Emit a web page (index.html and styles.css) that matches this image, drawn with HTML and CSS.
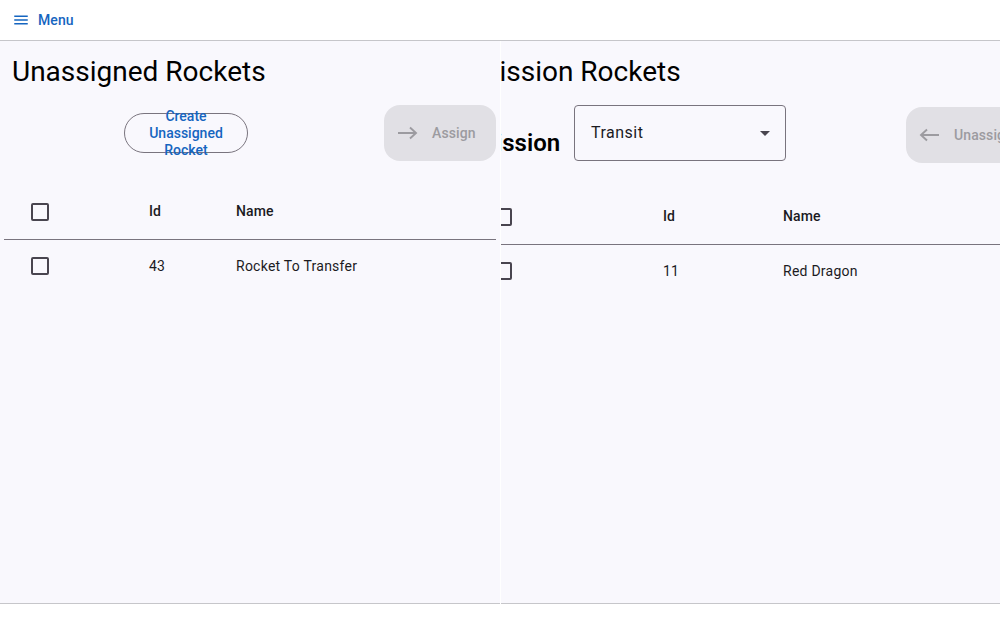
FILE: index.html
```html
<!DOCTYPE html>
<html lang="en">
<head>
<meta charset="utf-8">
<title>Rockets</title>
<link rel="stylesheet" href="styles.css">
</head>
<body>
<header class="topbar">
  <button class="menu-btn" type="button">
    <svg class="menu-icon" viewBox="0 0 24 24" width="18" height="18" aria-hidden="true"><path d="M3 18h18v-2H3v2zm0-5h18v-2H3v2zm0-7v2h18V6H3z" fill="currentColor"/></svg>
    <span>Menu</span>
  </button>
</header>
<main class="panels">
  <section class="panel">
    <div class="panel-inner">
      <h1 class="panel-title">Unassigned Rockets</h1>
      <div class="actions actions-left">
        <button class="btn-outline" type="button">Create Unassigned Rocket</button>
        <button class="btn-tonal btn-assign" type="button" disabled>
          <svg width="21" height="14" viewBox="0 0 21 14" aria-hidden="true"><path d="M1 7h18M13 1.5L19 7l-6 5.5" fill="none" stroke="currentColor" stroke-width="1.9"/></svg>
          <span>Assign</span>
        </button>
      </div>
      <div class="table table-left">
        <div class="tr th">
          <div class="td"><span class="checkbox"></span></div>
          <div class="td">Id</div>
          <div class="td">Name</div>
        </div>
        <div class="tr">
          <div class="td"><span class="checkbox"></span></div>
          <div class="td">43</div>
          <div class="td">Rocket To Transfer</div>
        </div>
      </div>
    </div>
  </section>
  <section class="panel panel-right">
    <div class="panel-inner shifted">
      <h1 class="panel-title">Mission Rockets</h1>
      <div class="actions actions-right">
        <span class="mission-label">Mission</span>
        <div class="select">
          <span>Transit</span>
          <svg class="select-arrow" viewBox="0 0 24 24" width="24" height="24" aria-hidden="true"><path d="M7 10l5 5 5-5z" fill="currentColor"/></svg>
        </div>
        <button class="btn-tonal btn-unassign" type="button" disabled>
          <svg width="21" height="14" viewBox="0 0 21 14" aria-hidden="true"><path d="M20 7H2M8 1.5L2 7l6 5.5" fill="none" stroke="currentColor" stroke-width="1.9"/></svg>
          <span>Unassign</span>
        </button>
      </div>
      <div class="table table-right">
        <div class="tr th">
          <div class="td"><span class="checkbox"></span></div>
          <div class="td">Id</div>
          <div class="td">Name</div>
        </div>
        <div class="tr">
          <div class="td"><span class="checkbox"></span></div>
          <div class="td">11</div>
          <div class="td">Red Dragon</div>
        </div>
      </div>
    </div>
  </section>
</main>
</body>
</html>
```

FILE: styles.css
```css
* { box-sizing: border-box; }
html, body { margin: 0; padding: 0; background: #ffffff; }
body {
  font-family: Roboto, "Liberation Sans", Arial, sans-serif;
  color: #1c1b1f;
  width: 1000px;
  height: 634px;
  overflow: hidden;
}

.topbar {
  height: 41px;
  border-bottom: 1px solid #c6c6ca;
  background: #ffffff;
  display: flex;
  align-items: center;
}
.menu-btn {
  height: 40px;
  display: flex;
  align-items: center;
  gap: 8px;
  padding: 0 0 0 12px;
  border: 0;
  background: transparent;
  color: #1565c0;
  font-family: inherit;
  font-size: 14px;
  font-weight: 500;
  letter-spacing: 0.1px;
}
.menu-icon { display: block; }

.panels {
  display: flex;
  gap: 1px;
  height: 563px;
}
.panel {
  width: 500px;
  flex: 0 0 500px;
  background: #f9f8fd;
  border-bottom: 1px solid #c6c6ca;
  overflow: hidden;
}
.panel-right {
  flex: 1 1 auto;
  width: auto;
}
.panel-inner { width: 500px; }
.panel-inner.shifted {
  width: 590px;
  margin-left: -38px;
}

.panel-title {
  margin: 13px 0 0 12px;
  font-size: 28px;
  font-weight: 400;
  line-height: 36px;
  color: #000000;
}

.actions {
  display: flex;
  align-items: flex-start;
  margin-top: 15px;
  height: 56px;
}
.actions-right { height: 61px; }

.btn-outline {
  margin: 8px 0 0 124px;
  width: 124px;
  height: 40px;
  padding: 0 20px;
  border: 1px solid #79747e;
  border-radius: 20px;
  background: transparent;
  color: #1565c0;
  font-family: inherit;
  font-size: 14px;
  font-weight: 500;
  line-height: 17px;
  text-align: center;
  display: flex;
  align-items: center;
  justify-content: center;
}

.btn-tonal {
  height: 56px;
  border: 0;
  border-radius: 16px;
  background: #e1e0e5;
  color: #9c9ba0;
  font-family: inherit;
  font-size: 14px;
  font-weight: 500;
  letter-spacing: 0.1px;
  display: flex;
  align-items: center;
  gap: 14px;
  padding: 0 20px 0 13px;
}
.btn-tonal svg { display: block; }
.btn-assign { margin-left: 136px; width: 112px; }
.btn-unassign { margin: 2px 0 0 120px; width: 132px; }

.mission-label {
  margin: 24px 0 0 12px;
  font-size: 24px;
  font-weight: 600;
  line-height: 28px;
  color: #000000;
  width: 99px;
}
.select {
  width: 212px;
  height: 56px;
  border: 1px solid #79747e;
  border-radius: 4px;
  display: flex;
  align-items: center;
  justify-content: space-between;
  padding: 0 8px 0 16px;
  font-size: 16px;
  letter-spacing: 0.5px;
  color: #1c1b1f;
}
.select span { margin-top: -2px; }
.select-arrow { color: #49454f; display: block; }

.table {
  margin: 22px 4px 0 4px;
  font-size: 14px;
  letter-spacing: 0.25px;
  color: #1c1b1f;
}
.tr {
  display: grid;
  align-items: center;
  height: 51px;
}
.tr.th {
  height: 57px;
  border-bottom: 1px solid #79747e;
  font-weight: 500;
  letter-spacing: 0.1px;
}
.table-left .tr { grid-template-columns: 145px 87px 1fr; }
.table-right .tr { grid-template-columns: 196px 120px 1fr; }
.td:first-child { padding-left: 27px; display: flex; align-items: center; }
.th .td:first-child { margin-top: 1px; }

.checkbox {
  display: block;
  width: 18px;
  height: 18px;
  border: 2px solid #49454f;
  border-radius: 2px;
}
```
